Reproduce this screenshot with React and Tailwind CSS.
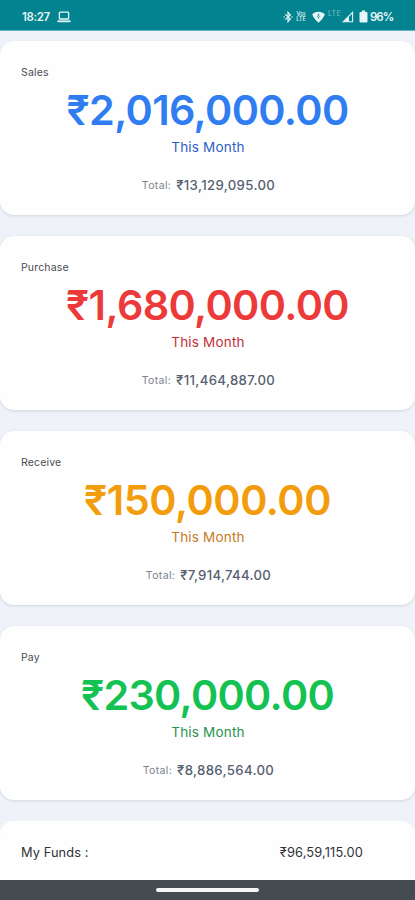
const cards = [
  {
    label: "Sales",
    amount: "₹2,016,000.00",
    total: "₹13,129,095.00",
    amountClass: "text-[#2f7df0] tracking-[-0.6px]",
    monthClass: "text-[#2f5fc4]",
    totalClass: "tracking-[0.35px]",
  },
  {
    label: "Purchase",
    amount: "₹1,680,000.00",
    total: "₹11,464,887.00",
    amountClass: "text-[#ec3a3a] tracking-[-0.6px]",
    monthClass: "text-[#c03238]",
    totalClass: "tracking-[0.35px]",
  },
  {
    label: "Receive",
    amount: "₹150,000.00",
    total: "₹7,914,744.00",
    amountClass: "text-[#f39c0c] tracking-[-0.45px]",
    monthClass: "text-[#c67a1c]",
    totalClass: "tracking-[0.3px]",
  },
  {
    label: "Pay",
    amount: "₹230,000.00",
    total: "₹8,886,564.00",
    amountClass: "text-[#14c254] tracking-[-0.65px]",
    monthClass: "text-[#27934f]",
    totalClass: "tracking-[0.35px]",
  },
];

function StatusBar() {
  return (
    <header className="flex h-[31px] shrink-0 items-center justify-between border-b border-[#5fb3bf] bg-[#02838f] pt-[3px] pr-[22px] pl-[22px] text-[#e6f6f7]">
      <div className="flex items-center gap-[7px]">
        <span className="w-7 pt-[2px] text-[11.5px] font-semibold tracking-[-0.4px]">18:27</span>
        <svg width="14" height="12" viewBox="0 0 14 12" fill="none" stroke="currentColor" strokeWidth="1.3">
          <rect x="2.4" y="1.2" width="9.2" height="6.8" rx="0.6" />
          <path d="M0.4 10.3h13.2" strokeWidth="1.8" />
        </svg>
      </div>
      <div className="flex items-center">
        {/* Bluetooth */}
        <svg width="10" height="12" viewBox="0 0 10 12" fill="none" stroke="currentColor" strokeWidth="1.2">
          <path d="M2.2 3.4l5.2 4.7L5 10.7V1.3l2.4 2.6-5.2 4.7" />
          <path d="M0.2 6h1.6M8.2 6h1.6" />
        </svg>
        <span className="ml-[2px] flex w-3 flex-col text-center text-[5.5px] leading-[5px] font-semibold opacity-90">
          <span>Vo)</span>
          <span>LTE</span>
        </span>
        {/* Wifi */}
        <svg className="ml-[5px]" width="13" height="12" viewBox="0 0 13 12">
          <path d="M0.2 3.2C2.6 -0.2 10.4 -0.2 12.8 3.2C11.8 6.4 8.8 9.6 6.5 11.7C4.2 9.6 1.2 6.4 0.2 3.2z" fill="currentColor" />
          <path d="M6.5 2.8v1.8M6.5 6v1.6M4.9 5.2h1M7.2 5.2h1" stroke="#02838f" strokeWidth="1.1" />
        </svg>
        <span className="ml-[3px] w-[13px] self-start pt-[3px] text-[7px] leading-[8px] tracking-[0.3px] opacity-50">LTE</span>
        {/* Signal */}
        <svg className="ml-[1px]" width="12" height="12" viewBox="0 0 12 12">
          <path d="M10.6 1.4v9.4H1.2z" fill="none" stroke="currentColor" strokeWidth="1.1" />
          <path d="M7 5v5.8H1.2z" fill="currentColor" />
        </svg>
        {/* Battery */}
        <svg className="ml-[5px]" width="9" height="13" viewBox="0 0 9 13" fill="currentColor">
          <path d="M2.8 0.4h3.4v1.5h1.4a.9.9 0 0 1 .9.9v8.8a.9.9 0 0 1-.9.9H1.4a.9.9 0 0 1-.9-.9V2.8a.9.9 0 0 1 .9-.9h1.4z" />
        </svg>
        <span className="ml-[2px] w-[23px] pt-[2px] text-[11.5px] font-semibold tracking-[-1px] whitespace-nowrap">96%</span>
      </div>
    </header>
  );
}

function SummaryCard({ label, amount, total, amountClass, monthClass, totalClass }) {
  return (
    <section className="h-[174px] shrink-0 rounded-[14px] bg-[#fefefe] px-[21px] pt-6 shadow-[0_1px_3px_rgba(70,85,110,0.18)]">
      <div className="h-4 text-[10.5px] leading-4 tracking-[0.15px] text-[#4a4d50]">{label}</div>
      <div className={`h-[56px] text-center text-[41.3px] leading-[58px] font-semibold whitespace-nowrap ${amountClass}`}>
        {amount}
      </div>
      <div className={`h-5 pl-px text-center text-[13.5px] leading-5 tracking-[0.2px] ${monthClass}`}>This Month</div>
      <div className="mt-[19px] flex h-5 items-center justify-center gap-[5px] pl-[2px] text-[#566070]">
        <span className="text-[10.5px] tracking-[0.35px] text-[#7b838c]">Total:</span>
        <span className={`text-[13.2px] font-medium ${totalClass}`}>{total}</span>
      </div>
    </section>
  );
}

export default function App() {
  return (
    <div className="flex h-[900px] w-full flex-col overflow-hidden bg-[#eff3f9] font-['Inter','Noto_Sans',sans-serif]">
      <StatusBar />
      <main className="flex min-h-0 flex-1 flex-col gap-[21px] overflow-hidden pt-[10px]">
        {cards.map((card) => (
          <SummaryCard key={card.label} {...card} />
        ))}
        <section className="flex h-[90px] shrink-0 items-start justify-between rounded-t-[14px] bg-[#fefefe] pt-[22px] pr-[52px] pl-[21px] text-[12.8px] leading-5 text-[#303338]">
          <span className="tracking-[0.1px]">My Funds :</span>
          <span className="tracking-[0.15px]">₹96,59,115.00</span>
        </section>
      </main>
      <footer className="flex h-[20px] shrink-0 items-center justify-center bg-[#444c52]">
        <div className="h-1 w-[103px] rounded-full bg-[#f5f6f7]" />
      </footer>
    </div>
  );
}
